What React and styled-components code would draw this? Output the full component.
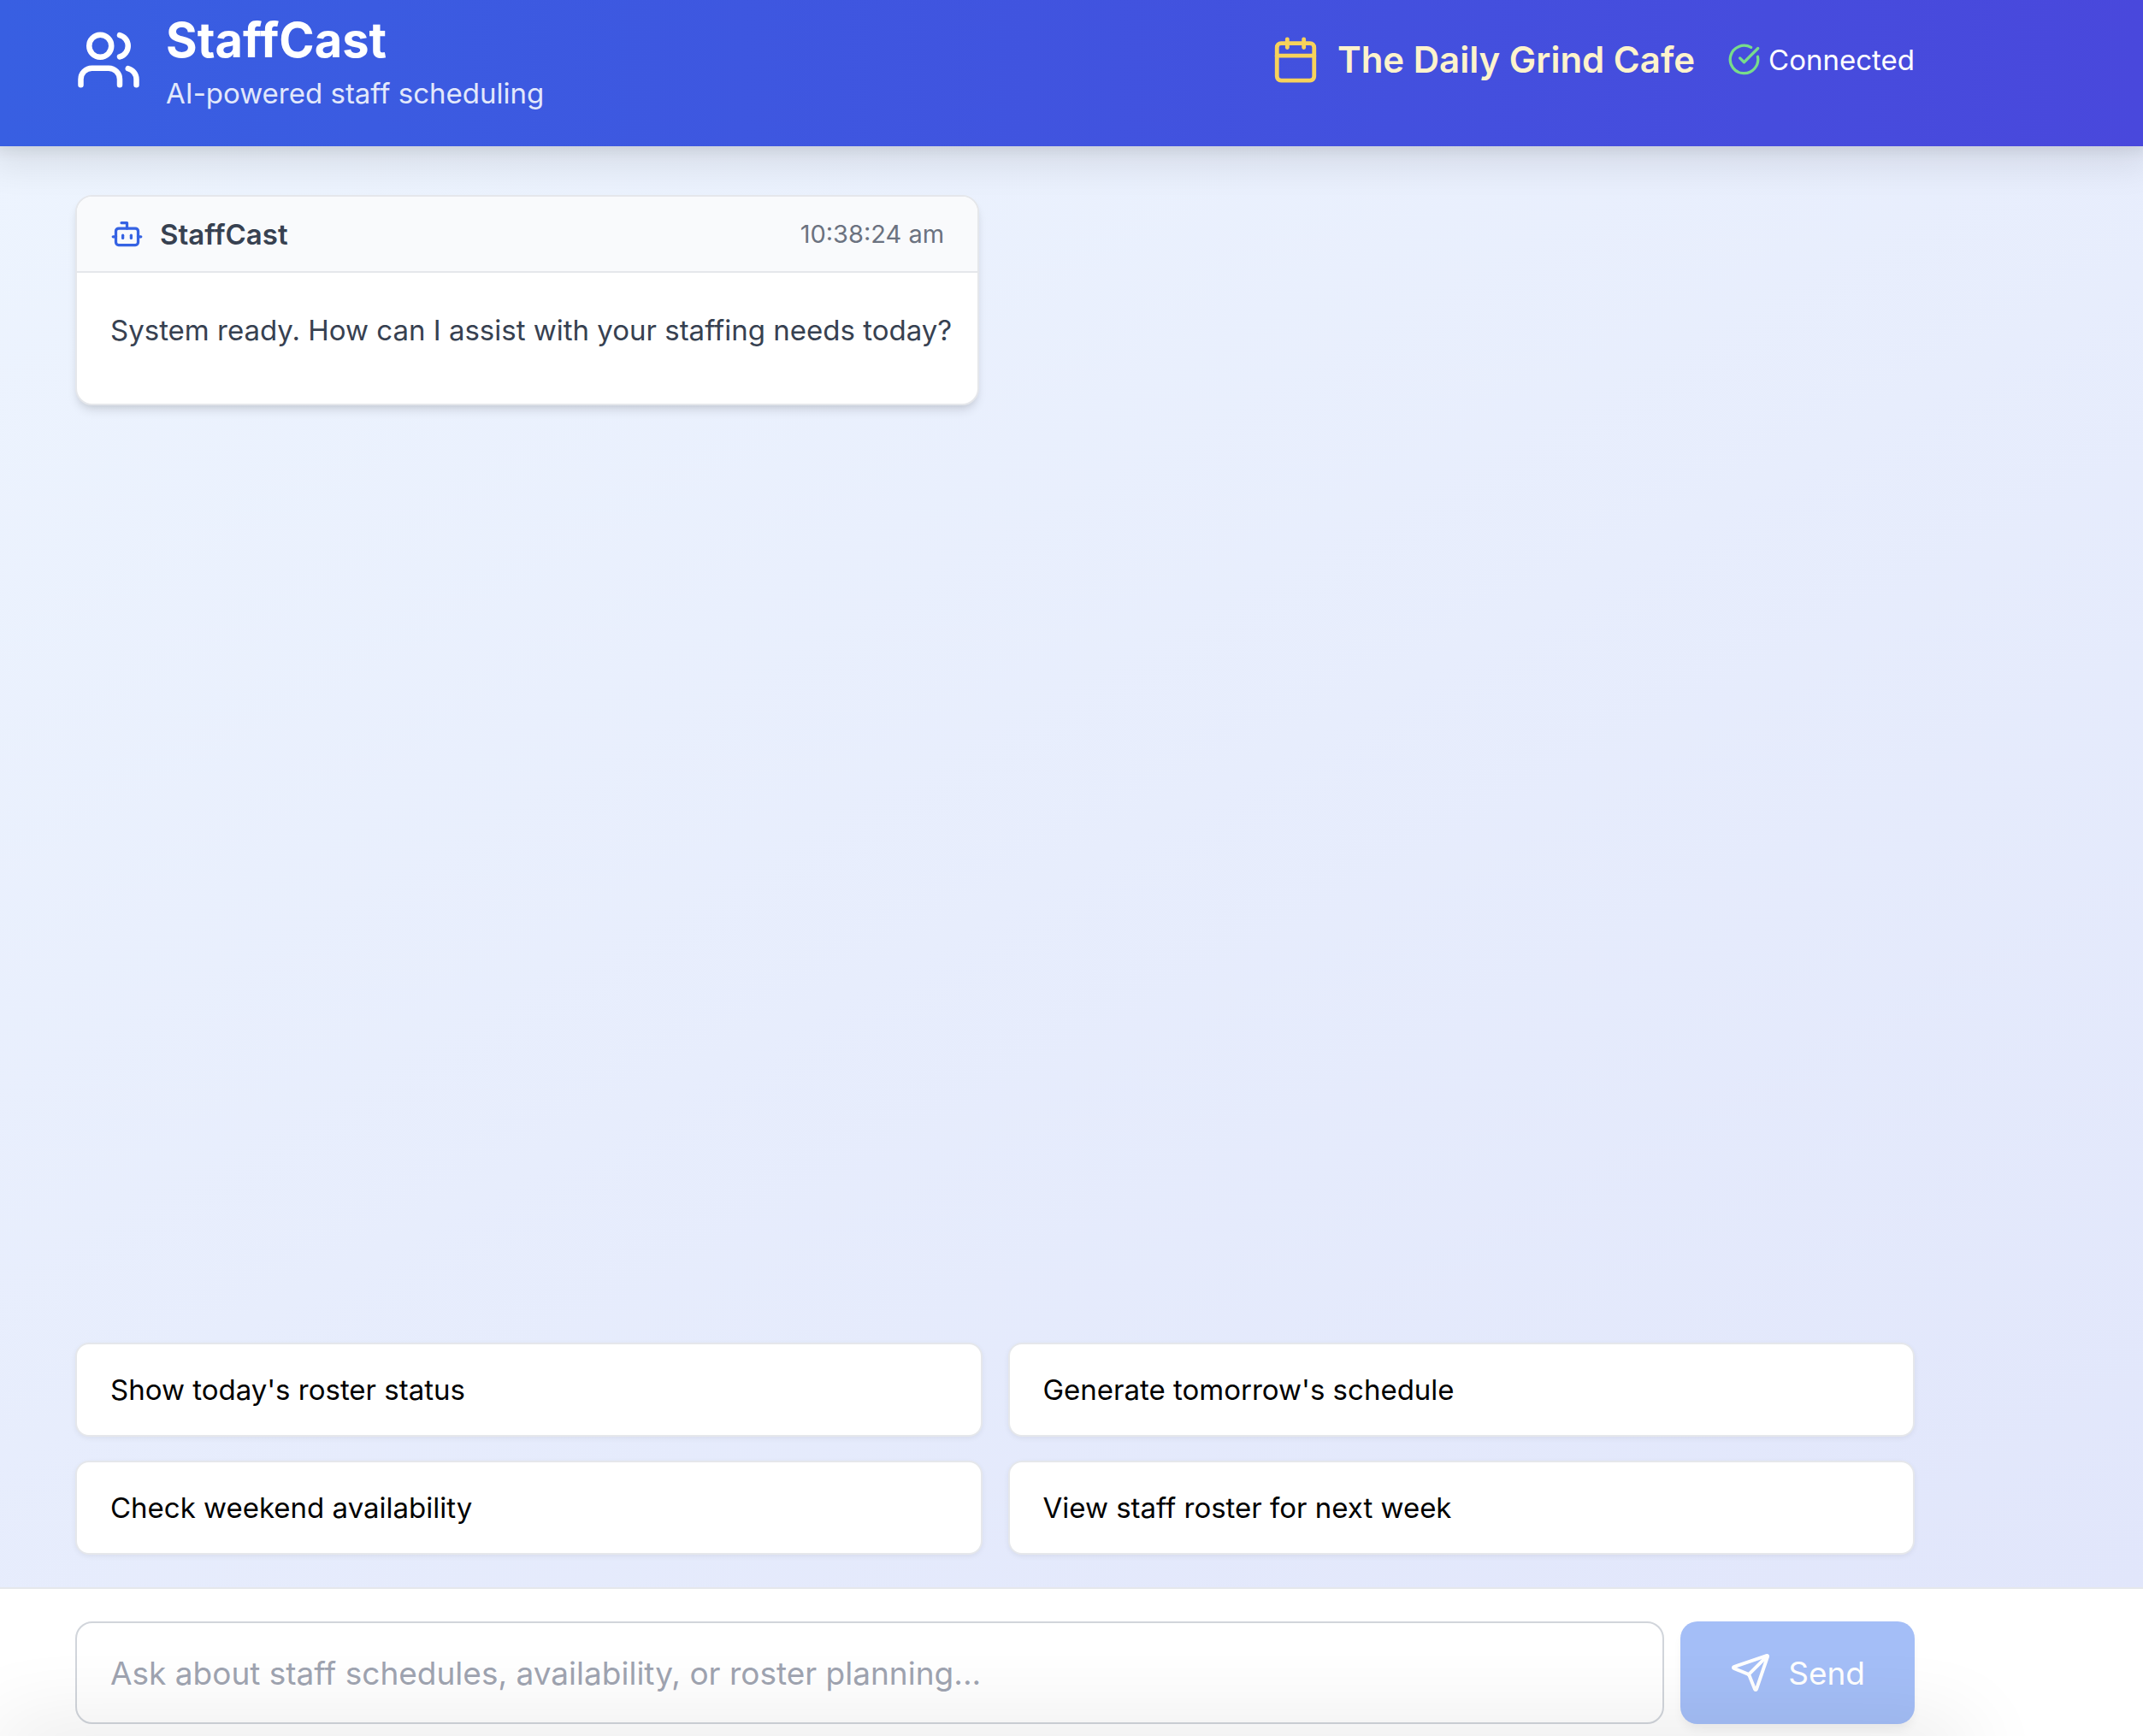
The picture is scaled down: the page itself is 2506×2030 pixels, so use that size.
import React, { useState } from 'react';
import styled, { createGlobalStyle } from 'styled-components';
import { Users, Calendar, CircleCheckBig, Bot, Send } from 'lucide-react';

const GlobalStyle = createGlobalStyle`
  *, *::before, *::after { box-sizing: border-box; }
  body { margin: 0; }
  h1, h2, p { margin: 0; }
  body, button, input {
    font-family: Inter, Roboto, "Liberation Sans", sans-serif;
  }
`;

const Page = styled.div`
  position: relative;
  display: flex;
  flex-direction: column;
  min-height: 100vh;
  overflow: hidden;
`;

const Shell = styled.div`
  padding: 0 267px 0 88px;
`;

const Header = styled.header`
  position: relative;
  padding-bottom: 32px;
  color: #fff;
  background: linear-gradient(to right, #385fe2, #4948dc);
  box-shadow: 0 12px 40px 10px rgba(0, 0, 0, 0.09), 0 2px 12px 6px rgba(0, 0, 0, 0.05);
`;

const HeaderRow = styled(Shell)`
  display: flex;
  align-items: center;
  justify-content: space-between;
  height: 139px;
`;

const Cluster = styled.div`
  display: flex;
  align-items: center;
  gap: ${(p) => p.$gap}px;
`;

const Brand = styled.div`
  padding-top: 10px;
`;

const Title = styled.h1`
  font-size: 56px;
  font-weight: 700;
  line-height: 68px;
`;

const Tagline = styled.p`
  font-size: 33px;
  line-height: 56px;
  color: #e2e8fb;
`;

const Venue = styled.h2`
  font-size: 42px;
  font-weight: 600;
  line-height: 56px;
  color: #fdf3cc;
`;

const Status = styled.span`
  font-size: 33px;
  line-height: 48px;
`;

const Main = styled.main`
  display: flex;
  flex: 1;
  flex-direction: column;
  background: linear-gradient(151deg, #edf4fe, #e1e6fb);
`;

const Body = styled(Shell)`
  display: flex;
  flex: 1;
  flex-direction: column;
  justify-content: space-between;
  gap: 38px;
  padding-top: 57px;
  padding-bottom: 38px;
`;

const MessageCard = styled.article`
  align-self: flex-start;
  overflow: hidden;
  border: 2px solid #e5e7eb;
  border-radius: 20px;
  background: #fff;
  color: #374151;
  box-shadow: 0 8px 12px -2px rgba(0, 0, 0, 0.1), 0 4px 8px -4px rgba(0, 0, 0, 0.1);
`;

const MessageHeader = styled.header`
  display: flex;
  align-items: center;
  justify-content: space-between;
  height: 89px;
  padding: 0 39px;
  border-bottom: 2px solid #e5e7eb;
  background: #f9fafc;
`;

const Sender = styled.span`
  font-size: 33px;
  font-weight: 600;
`;

const Time = styled.time`
  font-size: 29px;
  color: #6b7280;
`;

const MessageText = styled.p`
  padding: 39px 30px 57px 39px;
  font-size: 33px;
  line-height: 57px;
`;

const Prompts = styled.div`
  display: grid;
  grid-template-columns: 1fr 1fr;
  gap: 28px 30px;
`;

const Prompt = styled.button`
  height: 110px;
  padding: 0 39px;
  border: 2px solid #e5e7eb;
  border-radius: 16px;
  background: #fff;
  color: #000;
  font-size: 33px;
  text-align: left;
  cursor: pointer;
  box-shadow: 0 2px 6px rgba(0, 0, 0, 0.06);
`;

const Footer = styled.footer`
  padding: 38px 0 14px;
  border-top: 2px solid #e5e7eb;
  background: #fff;
`;

const Composer = styled(Shell).attrs({ as: 'form' })`
  display: flex;
  gap: 19px;
`;

const Field = styled.input`
  flex: 1;
  min-width: 0;
  height: 120px;
  padding: 0 39px;
  border: 2px solid #d1d5db;
  border-radius: 20px;
  background: #fff;
  color: #111827;
  font-size: 37px;
  &::placeholder { color: #9fa4b1; opacity: 1; }
`;

const SendButton = styled.button`
  display: flex;
  align-items: center;
  gap: 20px;
  height: 120px;
  padding: 0 58px;
  border: 0;
  border-radius: 20px;
  background: #a4bef7;
  color: #fff;
  font-size: 37px;
  box-shadow: 0 8px 12px -2px rgba(0, 0, 0, 0.06);
`;

const BottomShade = styled.div`
  position: absolute;
  left: 0;
  right: 208px;
  bottom: -40px;
  height: 40px;
  pointer-events: none;
  box-shadow: 0 0 100px rgba(0, 0, 0, 0.16);
`;

const prompts = [
  "Show today's roster status",
  "Generate tomorrow's schedule",
  'Check weekend availability',
  'View staff roster for next week',
];

export default function App() {
  const [draft, setDraft] = useState('');
  return (
    <Page>
      <GlobalStyle />
      <Header>
        <HeaderRow>
          <Cluster $gap={28}>
            <Users size={78} />
            <Brand>
              <Title>StaffCast</Title>
              <Tagline>AI-powered staff scheduling</Tagline>
            </Brand>
          </Cluster>
          <Cluster $gap={38}>
            <Cluster $gap={20}>
              <Calendar size={58} color="#f7d25b" />
              <Venue>The Daily Grind Cafe</Venue>
            </Cluster>
            <Cluster $gap={9}>
              <CircleCheckBig size={39} color="#78dc8b" />
              <Status>Connected</Status>
            </Cluster>
          </Cluster>
        </HeaderRow>
      </Header>
      <Main>
        <Body>
          <MessageCard>
            <MessageHeader>
              <Cluster $gap={19}>
                <Bot size={39} color="#3562e3" />
                <Sender>StaffCast</Sender>
              </Cluster>
              <Time>10:38:24 am</Time>
            </MessageHeader>
            <MessageText>System ready. How can I assist with your staffing needs today?</MessageText>
          </MessageCard>
          <Prompts>
            {prompts.map((text) => (
              <Prompt key={text} type="button" onClick={() => setDraft(text)}>
                {text}
              </Prompt>
            ))}
          </Prompts>
        </Body>
      </Main>
      <Footer>
        <Composer onSubmit={(e) => e.preventDefault()}>
          <Field
            aria-label="Message"
            placeholder="Ask about staff schedules, availability, or roster planning..."
            value={draft}
            onChange={(e) => setDraft(e.target.value)}
          />
          <SendButton type="submit">
            <Send size={48} />
            Send
          </SendButton>
        </Composer>
      </Footer>
      <BottomShade />
    </Page>
  );
}
